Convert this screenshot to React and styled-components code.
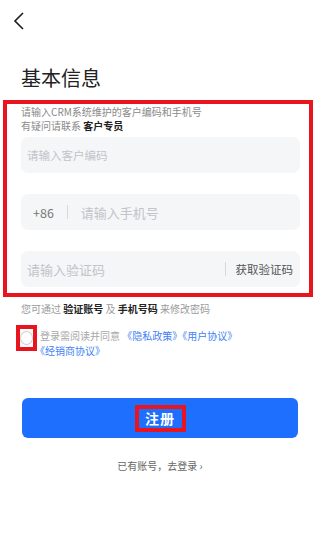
import React from "react";
import styled, { createGlobalStyle } from "styled-components";

const GlobalStyle = createGlobalStyle`
  body {
    margin: 0;
    background: #ffffff;
    font-family: "Noto Sans CJK SC", "Noto Sans", sans-serif;
  }
`;

const Page = styled.div`
  width: 320px;
  height: 550px;
  display: flex;
  flex-direction: column;
  background: #fff;
  overflow: hidden;
`;

const Header = styled.div`
  height: 42px;
  display: flex;
  align-items: center;
  padding-left: 13px;
`;

const Title = styled.h1`
  margin: 22px 0 0 21px;
  font-size: 20px;
  line-height: 28px;
  font-weight: 400;
  color: #222;
`;

// red annotation frame seen in the screenshot
const Marked = styled.div`
  border: 4px solid #e8151f;
`;

const FormBox = styled(Marked)`
  margin: 8px 7px 0 3px;
  padding: 1px 9px 6px 14px;
  display: flex;
  flex-direction: column;
`;

const Hint = styled.p`
  margin: 0;
  font-size: 10px;
  line-height: 13.5px;
  color: #8a8a8a;
`;

const Strong = styled.b`
  font-weight: 600;
  color: #222;
`;

const Field = styled.div`
  height: 36px;
  margin-top: ${(p) => p.$gap}px;
  display: flex;
  align-items: center;
  padding: 0 7px 0 6px;
  background: #f5f6f8;
  border-radius: 7px;
  font-size: 13px;
`;

const Placeholder = styled.span`
  flex: 1;
  color: #c2c4c8;
  font-size: ${(p) => p.$size || 13}px;
`;

const Prefix = styled.span`
  color: #777;
  padding-left: 6px;
  font-size: 12.5px;
`;

const Divider = styled.span`
  width: 1px;
  height: 14px;
  background: #d8d8d8;
  margin: 0 ${(p) => p.$space}px;
`;

const CodeButton = styled.span`
  color: #555;
  font-size: 11.5px;
`;

const Note = styled.p`
  margin: 5px 0 0 21px;
  font-size: 10px;
  line-height: 14px;
  color: #9a9a9a;
`;

const Agreement = styled.div`
  display: flex;
  align-items: flex-start;
  margin: 9px 0 0 16px;
`;

const CheckMark = styled(Marked)`
  width: 13px;
  height: 18px;
  display: flex;
  align-items: center;
  justify-content: center;
  background: #fff;
`;

const Circle = styled.span`
  flex: none;
  width: 11px;
  height: 12px;
  border: 1px solid #cfcfcf;
  border-radius: 50%;
`;

const AgreeText = styled.p`
  margin: 3px 0 0 3px;
  width: 200px;
  font-size: 10px;
  line-height: 15px;
  color: #a8a8a8;
`;

const Link = styled.span`
  color: #3f82f5;
  white-space: nowrap;
`;

const Submit = styled.button`
  margin: 40px 0 0 22px;
  width: 276px;
  height: 40px;
  border: none;
  border-radius: 6px;
  background: #1f6fff;
  display: flex;
  align-items: center;
  justify-content: center;
  font-family: inherit;
  padding: 0;
`;

const SubmitLabel = styled(Marked)`
  width: 43px;
  height: 19px;
  display: flex;
  align-items: center;
  justify-content: center;
  color: #fff;
  font-size: 14px;
  font-weight: 700;
  letter-spacing: 1px;
`;

const LoginLink = styled.p`
  margin: 20px 0 0;
  text-align: center;
  font-size: 10px;
  line-height: 15px;
  color: #666;
`;

const App = () => (
  <Page>
    <GlobalStyle />
    <Header>
      <svg width="12" height="18" viewBox="0 0 12 18">
        <polyline
          points="10,1 2,9 10,17"
          fill="none"
          stroke="#1a1a1a"
          strokeWidth="1.6"
        />
      </svg>
    </Header>
    <Title>基本信息</Title>
    <FormBox>
      <Hint>请输入CRM系统维护的客户编码和手机号</Hint>
      <Hint>
        有疑问请联系 <Strong>客户专员</Strong>
      </Hint>
      <Field $gap={5}>
        <Placeholder $size={11.5}>请输入客户编码</Placeholder>
      </Field>
      <Field $gap={21}>
        <Prefix>+86</Prefix>
        <Divider $space={13} />
        <Placeholder>请输入手机号</Placeholder>
      </Field>
      <Field $gap={21}>
        <Placeholder>请输入验证码</Placeholder>
        <Divider $space={10} />
        <CodeButton>获取验证码</CodeButton>
      </Field>
    </FormBox>
    <Note>
      您可通过 <Strong>验证账号</Strong> 及 <Strong>手机号码</Strong> 来修改密码
    </Note>
    <Agreement>
      <CheckMark>
        <Circle />
      </CheckMark>
      <AgreeText>
        登录需阅读并同意 <Link>《隐私政策》</Link>
        <Link>《用户协议》</Link>
        <Link>《经销商协议》</Link>
      </AgreeText>
    </Agreement>
    <Submit>
      <SubmitLabel>注册</SubmitLabel>
    </Submit>
    <LoginLink>已有账号，去登录 ›</LoginLink>
  </Page>
);

export default App;
